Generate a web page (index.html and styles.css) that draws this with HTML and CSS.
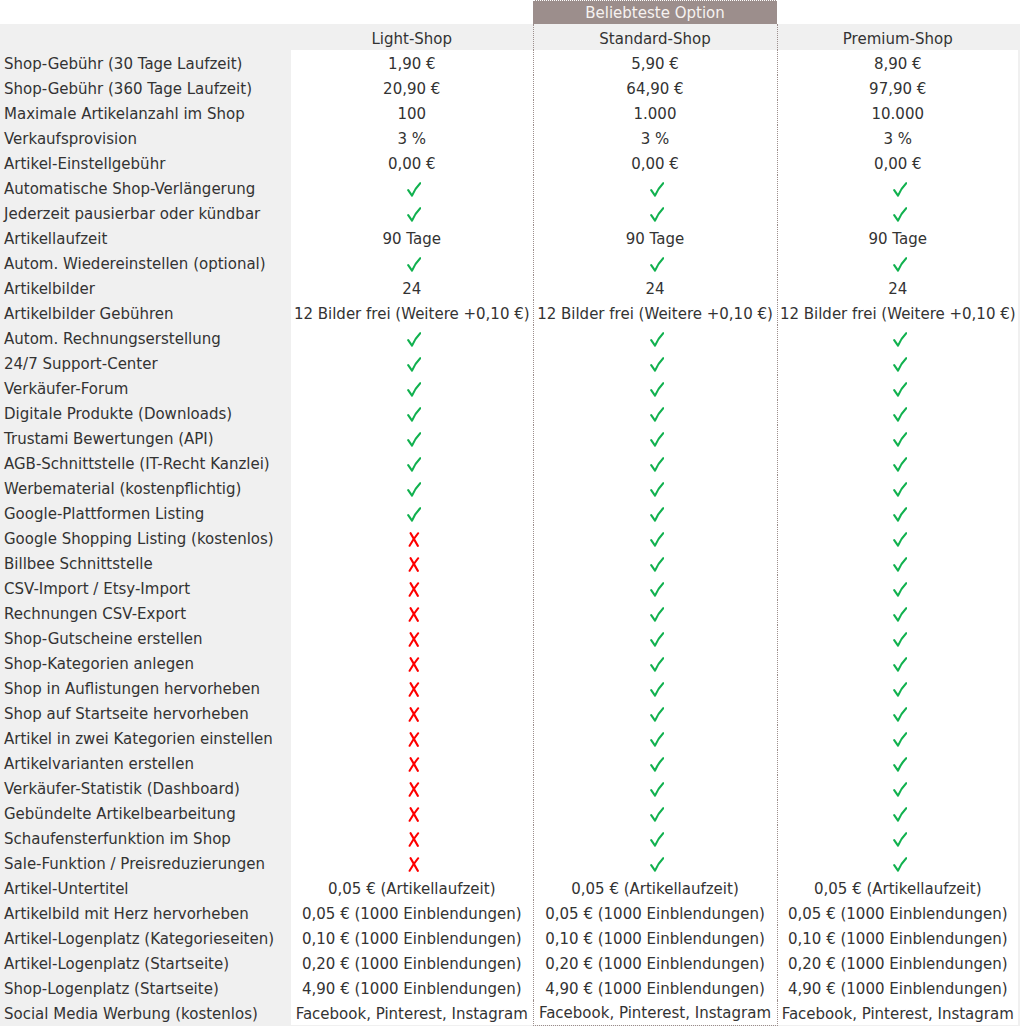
FILE: index.html
```html
<!DOCTYPE html>
<html lang="de">
<head>
<meta charset="utf-8">
<title>Shop-Vergleich</title>
<link rel="stylesheet" href="styles.css">
</head>
<body>
<svg class="defs" width="0" height="0" aria-hidden="true">
  <defs>
    <symbol id="ic-yes" viewBox="0 0 14 15">
      <path d="M1.2 8.2 L5 13.6 Q8 6.5 13.2 1.2" fill="none" stroke="currentColor" stroke-width="2.1" stroke-linecap="round" stroke-linejoin="round"/>
    </symbol>
    <symbol id="ic-no" viewBox="0 0 12 15">
      <path d="M2.6 1.2 Q6 7 9.8 13.8" fill="none" stroke="currentColor" stroke-width="2.2" stroke-linecap="round"/>
      <path d="M10.2 1.2 Q5.5 7 1.6 13.8" fill="none" stroke="currentColor" stroke-width="2" stroke-linecap="round"/>
    </symbol>
  </defs>
</svg>
<div class="page">
  <div class="badge-row">
    <div class="badge">Beliebteste Option</div>
  </div>
  <div class="table-wrap">
    <table class="compare">
      <colgroup>
        <col class="c-label"><col class="c-light"><col class="c-std"><col class="c-prem">
      </colgroup>
      <thead>
        <tr class="head">
          <th class="label"></th>
          <th>Light-Shop</th>
          <th class="std">Standard-Shop</th>
          <th>Premium-Shop</th>
        </tr>
      </thead>
      <tbody>
        <tr><td class="label">Shop-Gebühr (30 Tage Laufzeit)</td><td>1,90 €</td><td class="std">5,90 €</td><td>8,90 €</td></tr>
        <tr><td class="label">Shop-Gebühr (360 Tage Laufzeit)</td><td>20,90 €</td><td class="std">64,90 €</td><td>97,90 €</td></tr>
        <tr><td class="label">Maximale Artikelanzahl im Shop</td><td>100</td><td class="std">1.000</td><td>10.000</td></tr>
        <tr><td class="label">Verkaufsprovision</td><td>3 %</td><td class="std">3 %</td><td>3 %</td></tr>
        <tr><td class="label">Artikel-Einstellgebühr</td><td>0,00 €</td><td class="std">0,00 €</td><td>0,00 €</td></tr>
        <tr><td class="label">Automatische Shop-Verlängerung</td><td><svg class="yes"><use href="#ic-yes"/></svg></td><td class="std"><svg class="yes"><use href="#ic-yes"/></svg></td><td><svg class="yes"><use href="#ic-yes"/></svg></td></tr>
        <tr><td class="label">Jederzeit pausierbar oder kündbar</td><td><svg class="yes"><use href="#ic-yes"/></svg></td><td class="std"><svg class="yes"><use href="#ic-yes"/></svg></td><td><svg class="yes"><use href="#ic-yes"/></svg></td></tr>
        <tr><td class="label">Artikellaufzeit</td><td>90 Tage</td><td class="std">90 Tage</td><td>90 Tage</td></tr>
        <tr><td class="label">Autom. Wiedereinstellen (optional)</td><td><svg class="yes"><use href="#ic-yes"/></svg></td><td class="std"><svg class="yes"><use href="#ic-yes"/></svg></td><td><svg class="yes"><use href="#ic-yes"/></svg></td></tr>
        <tr><td class="label">Artikelbilder</td><td>24</td><td class="std">24</td><td>24</td></tr>
        <tr><td class="label">Artikelbilder Gebühren</td><td>12 Bilder frei (Weitere +0,10 €)</td><td class="std">12 Bilder frei (Weitere +0,10 €)</td><td>12 Bilder frei (Weitere +0,10 €)</td></tr>
        <tr><td class="label">Autom. Rechnungserstellung</td><td><svg class="yes"><use href="#ic-yes"/></svg></td><td class="std"><svg class="yes"><use href="#ic-yes"/></svg></td><td><svg class="yes"><use href="#ic-yes"/></svg></td></tr>
        <tr><td class="label">24/7 Support-Center</td><td><svg class="yes"><use href="#ic-yes"/></svg></td><td class="std"><svg class="yes"><use href="#ic-yes"/></svg></td><td><svg class="yes"><use href="#ic-yes"/></svg></td></tr>
        <tr><td class="label">Verkäufer-Forum</td><td><svg class="yes"><use href="#ic-yes"/></svg></td><td class="std"><svg class="yes"><use href="#ic-yes"/></svg></td><td><svg class="yes"><use href="#ic-yes"/></svg></td></tr>
        <tr><td class="label">Digitale Produkte (Downloads)</td><td><svg class="yes"><use href="#ic-yes"/></svg></td><td class="std"><svg class="yes"><use href="#ic-yes"/></svg></td><td><svg class="yes"><use href="#ic-yes"/></svg></td></tr>
        <tr><td class="label">Trustami Bewertungen (API)</td><td><svg class="yes"><use href="#ic-yes"/></svg></td><td class="std"><svg class="yes"><use href="#ic-yes"/></svg></td><td><svg class="yes"><use href="#ic-yes"/></svg></td></tr>
        <tr><td class="label">AGB-Schnittstelle (IT-Recht Kanzlei)</td><td><svg class="yes"><use href="#ic-yes"/></svg></td><td class="std"><svg class="yes"><use href="#ic-yes"/></svg></td><td><svg class="yes"><use href="#ic-yes"/></svg></td></tr>
        <tr><td class="label">Werbematerial (kostenpflichtig)</td><td><svg class="yes"><use href="#ic-yes"/></svg></td><td class="std"><svg class="yes"><use href="#ic-yes"/></svg></td><td><svg class="yes"><use href="#ic-yes"/></svg></td></tr>
        <tr><td class="label">Google-Plattformen Listing</td><td><svg class="yes"><use href="#ic-yes"/></svg></td><td class="std"><svg class="yes"><use href="#ic-yes"/></svg></td><td><svg class="yes"><use href="#ic-yes"/></svg></td></tr>
        <tr><td class="label">Google Shopping Listing (kostenlos)</td><td><svg class="no"><use href="#ic-no"/></svg></td><td class="std"><svg class="yes"><use href="#ic-yes"/></svg></td><td><svg class="yes"><use href="#ic-yes"/></svg></td></tr>
        <tr><td class="label">Billbee Schnittstelle</td><td><svg class="no"><use href="#ic-no"/></svg></td><td class="std"><svg class="yes"><use href="#ic-yes"/></svg></td><td><svg class="yes"><use href="#ic-yes"/></svg></td></tr>
        <tr><td class="label">CSV-Import / Etsy-Import</td><td><svg class="no"><use href="#ic-no"/></svg></td><td class="std"><svg class="yes"><use href="#ic-yes"/></svg></td><td><svg class="yes"><use href="#ic-yes"/></svg></td></tr>
        <tr><td class="label">Rechnungen CSV-Export</td><td><svg class="no"><use href="#ic-no"/></svg></td><td class="std"><svg class="yes"><use href="#ic-yes"/></svg></td><td><svg class="yes"><use href="#ic-yes"/></svg></td></tr>
        <tr><td class="label">Shop-Gutscheine erstellen</td><td><svg class="no"><use href="#ic-no"/></svg></td><td class="std"><svg class="yes"><use href="#ic-yes"/></svg></td><td><svg class="yes"><use href="#ic-yes"/></svg></td></tr>
        <tr><td class="label">Shop-Kategorien anlegen</td><td><svg class="no"><use href="#ic-no"/></svg></td><td class="std"><svg class="yes"><use href="#ic-yes"/></svg></td><td><svg class="yes"><use href="#ic-yes"/></svg></td></tr>
        <tr><td class="label">Shop in Auflistungen hervorheben</td><td><svg class="no"><use href="#ic-no"/></svg></td><td class="std"><svg class="yes"><use href="#ic-yes"/></svg></td><td><svg class="yes"><use href="#ic-yes"/></svg></td></tr>
        <tr><td class="label">Shop auf Startseite hervorheben</td><td><svg class="no"><use href="#ic-no"/></svg></td><td class="std"><svg class="yes"><use href="#ic-yes"/></svg></td><td><svg class="yes"><use href="#ic-yes"/></svg></td></tr>
        <tr><td class="label">Artikel in zwei Kategorien einstellen</td><td><svg class="no"><use href="#ic-no"/></svg></td><td class="std"><svg class="yes"><use href="#ic-yes"/></svg></td><td><svg class="yes"><use href="#ic-yes"/></svg></td></tr>
        <tr><td class="label">Artikelvarianten erstellen</td><td><svg class="no"><use href="#ic-no"/></svg></td><td class="std"><svg class="yes"><use href="#ic-yes"/></svg></td><td><svg class="yes"><use href="#ic-yes"/></svg></td></tr>
        <tr><td class="label">Verkäufer-Statistik (Dashboard)</td><td><svg class="no"><use href="#ic-no"/></svg></td><td class="std"><svg class="yes"><use href="#ic-yes"/></svg></td><td><svg class="yes"><use href="#ic-yes"/></svg></td></tr>
        <tr><td class="label">Gebündelte Artikelbearbeitung</td><td><svg class="no"><use href="#ic-no"/></svg></td><td class="std"><svg class="yes"><use href="#ic-yes"/></svg></td><td><svg class="yes"><use href="#ic-yes"/></svg></td></tr>
        <tr><td class="label">Schaufensterfunktion im Shop</td><td><svg class="no"><use href="#ic-no"/></svg></td><td class="std"><svg class="yes"><use href="#ic-yes"/></svg></td><td><svg class="yes"><use href="#ic-yes"/></svg></td></tr>
        <tr><td class="label">Sale-Funktion / Preisreduzierungen</td><td><svg class="no"><use href="#ic-no"/></svg></td><td class="std"><svg class="yes"><use href="#ic-yes"/></svg></td><td><svg class="yes"><use href="#ic-yes"/></svg></td></tr>
        <tr><td class="label">Artikel-Untertitel</td><td>0,05 € (Artikellaufzeit)</td><td class="std">0,05 € (Artikellaufzeit)</td><td>0,05 € (Artikellaufzeit)</td></tr>
        <tr><td class="label">Artikelbild mit Herz hervorheben</td><td>0,05 € (1000 Einblendungen)</td><td class="std">0,05 € (1000 Einblendungen)</td><td>0,05 € (1000 Einblendungen)</td></tr>
        <tr><td class="label">Artikel-Logenplatz (Kategorieseiten)</td><td>0,10 € (1000 Einblendungen)</td><td class="std">0,10 € (1000 Einblendungen)</td><td>0,10 € (1000 Einblendungen)</td></tr>
        <tr><td class="label">Artikel-Logenplatz (Startseite)</td><td>0,20 € (1000 Einblendungen)</td><td class="std">0,20 € (1000 Einblendungen)</td><td>0,20 € (1000 Einblendungen)</td></tr>
        <tr><td class="label">Shop-Logenplatz (Startseite)</td><td>4,90 € (1000 Einblendungen)</td><td class="std">4,90 € (1000 Einblendungen)</td><td>4,90 € (1000 Einblendungen)</td></tr>
        <tr><td class="label">Social Media Werbung (kostenlos)</td><td>Facebook, Pinterest, Instagram</td><td class="std">Facebook, Pinterest, Instagram</td><td>Facebook, Pinterest, Instagram</td></tr>
      </tbody>
    </table>
  </div>
</div>
</body>
</html>
```

FILE: styles.css
```css
html, body {
  margin: 0;
  padding: 0;
  background: #ffffff;
}

body {
  font-family: "DejaVu Sans", Verdana, sans-serif;
  font-size: 15px;
  color: #333333;
  overflow: hidden;
}

.defs {
  position: absolute;
  width: 0;
  height: 0;
  overflow: hidden;
}

.page {
  width: 1020px;
}

.badge-row {
  display: grid;
  grid-template-columns: 533px 244px 1fr;
  height: 24px;
}

.badge {
  grid-column: 2;
  background: #9c8e8c;
  color: #f6f2f0;
  border-top: 1px dotted #ffffff;
  box-sizing: border-box;
  height: 24px;
  padding-top: 1px;
  line-height: 22px;
  text-align: center;
  font-size: 15px;
}

.table-wrap {
  background: #f0f0f0;
  padding-right: 2px;
  width: 1018px;
}

.compare {
  width: 1018px;
  table-layout: fixed;
  border-collapse: collapse;
  border-spacing: 0;
}

.c-label { width: 291px; }
.c-light { width: 242px; }
.c-std { width: 244px; }
.c-prem { width: 241px; }

.compare th,
.compare td {
  box-sizing: border-box;
  padding: 2px 0 0 0;
  text-align: center;
  vertical-align: middle;
  white-space: nowrap;
  font-weight: normal;
  height: 25px;
  background: #ffffff;
  overflow: visible;
}

.compare .head th {
  height: 26px;
  padding-top: 3px;
  background: #f0f0f0;
}

.compare td.label,
.compare th.label {
  background: #f0f0f0;
  text-align: left;
  padding-left: 4px;
}

.compare .std {
  border-left: 1px dotted #9c8e8c;
  border-right: 1px dotted #9c8e8c;
}

.compare tbody tr:last-child .std {
  border-bottom: 1px dotted #9c8e8c;
}

.yes,
.no {
  display: inline-block;
  vertical-align: middle;
  height: 15px;
  margin-left: 4px;
}

.yes {
  width: 14px;
  color: #11b14f;
}

.no {
  width: 12px;
  color: #ff0000;
}
```
